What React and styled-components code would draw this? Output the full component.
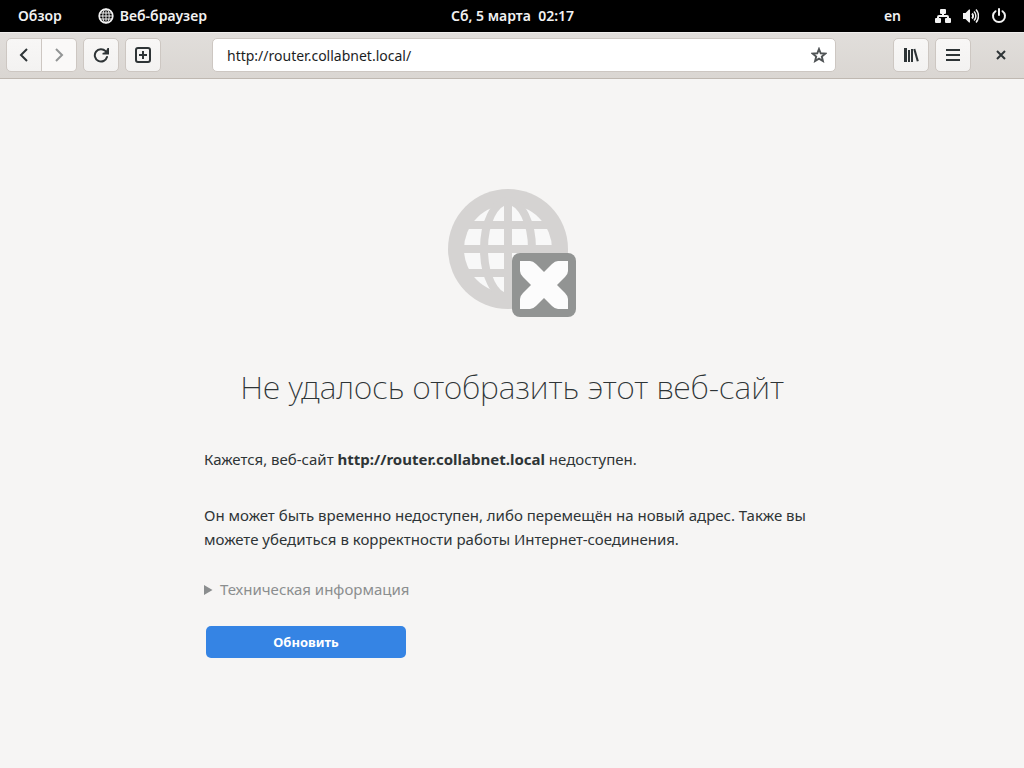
import React from 'react'

import styled, { createGlobalStyle } from 'styled-components'

function App() {
  return (
    <>
      <GlobalStyle />
      <Screen>
        <Panel>
          <PanelGroup>
            <PanelButton>
              <PanelLabel>Обзор</PanelLabel>
            </PanelButton>
            <PanelButton>
              <GlobeIcon />
              <PanelLabel>Веб-браузер</PanelLabel>
            </PanelButton>
          </PanelGroup>
          <PanelButton>
            <PanelLabel>Сб, 5 марта&nbsp; 02:17</PanelLabel>
          </PanelButton>
          <PanelGroup $end>
            <PanelButton>
              <PanelLabel>en</PanelLabel>
            </PanelButton>
            <StatusButton aria-label="Система">
              <NetworkIcon />
              <VolumeIcon />
              <PowerIcon />
            </StatusButton>
          </PanelGroup>
        </Panel>

        <HeaderBar>
          <Tools>
            <Linked>
              <ToolButton aria-label="Назад">
                <Icon>
                  <path d="M11 2 5 8l6 6" />
                </Icon>
              </ToolButton>
              <ToolButton aria-label="Вперёд" disabled>
                <Icon>
                  <path d="m5 2 6 6-6 6" />
                </Icon>
              </ToolButton>
            </Linked>
            <ToolButton aria-label="Перезагрузить">
              <ReloadIcon />
            </ToolButton>
            <ToolButton aria-label="Новая вкладка">
              <Icon>
                <rect x="1" y="1" width="14" height="14" rx="2" />
                <path d="M8 4v8M4 8h8" />
              </Icon>
            </ToolButton>
          </Tools>
          <Location>
            <Address
              type="text"
              aria-label="Адрес"
              defaultValue="http://router.collabnet.local/"
            />
            <PlainButton aria-label="Добавить закладку">
              <StarIcon />
            </PlainButton>
          </Location>
          <Tools>
            <ToolButton aria-label="Библиотека">
              <LibraryIcon />
            </ToolButton>
            <ToolButton aria-label="Меню">
              <Icon>
                <path d="M1 3h14M1 8h14M1 13h14" />
              </Icon>
            </ToolButton>
            <CloseButton aria-label="Закрыть">
              <Icon>
                <path d="m4 4 8 8M12 4l-8 8" />
              </Icon>
            </CloseButton>
          </Tools>
        </HeaderBar>

        <Page>
          <BrokenSite />
          <Title>Не удалось отобразить этот веб-сайт</Title>
          <Text>
            Кажется, веб-сайт <b>http://router.collabnet.local</b> недоступен.
          </Text>
          <Text>
            Он может быть временно недоступен, либо перемещён на новый адрес.
            Также вы можете убедиться в корректности работы
            Интернет-соединения.
          </Text>
          <Details>
            <summary>Техническая информация</summary>
          </Details>
          <Reload>Обновить</Reload>
        </Page>
      </Screen>
    </>
  )
}

export default App

function Icon({ children }) {
  return (
    <Svg viewBox="0 0 16 16" aria-hidden="true">
      {children}
    </Svg>
  )
}

function GlobeIcon() {
  return (
    <ThinSvg viewBox="0 0 16 16" aria-hidden="true">
      <circle cx="8" cy="8" r="6.800" strokeWidth="1.700" />
      <ellipse cx="8" cy="8" rx="3.200" ry="7" />
      <path d="M8 1v14M1 8h14M2 5h12M2 11h12" />
    </ThinSvg>
  )
}

function NetworkIcon() {
  return (
    <SolidSvg viewBox="0 0 16 16" aria-hidden="true">
      <path d="M6 1h4a1 1 0 0 1 1 1v3a1 1 0 0 1-1 1H9v1h3a2 2 0 0 1 2 2v1h1a1 1 0 0 1 1 1v3a1 1 0 0 1-1 1h-4a1 1 0 0 1-1-1v-3a1 1 0 0 1 1-1h1V9H4v1h1a1 1 0 0 1 1 1v3a1 1 0 0 1-1 1H1a1 1 0 0 1-1-1v-3a1 1 0 0 1 1-1h1V9a2 2 0 0 1 2-2h3V6H6a1 1 0 0 1-1-1V2a1 1 0 0 1 1-1Z" />
    </SolidSvg>
  )
}

function VolumeIcon() {
  return (
    <Svg viewBox="0 0 16 16" aria-hidden="true">
      <path
        d="M0 5h2.500L6 1.500h1v13H6L2.500 11H0Z"
        fill="currentColor"
        stroke="none"
      />
      <path d="M9 5.500c1.400 1.300 1.400 3.700 0 5" />
      <path d="M11 3.500c2.500 2.500 2.500 6.500 0 9" strokeWidth="1.500" />
      <path d="M13 1.500c3.300 3.800 3.300 9.200 0 13" strokeWidth="1.500" />
    </Svg>
  )
}

function PowerIcon() {
  return (
    <Svg viewBox="0 0 16 16" aria-hidden="true">
      <path d="M4.500 3.200a6 6 0 1 0 7 0" strokeLinecap="round" />
      <path d="M8 1v6" strokeLinecap="round" />
    </Svg>
  )
}

function ReloadIcon() {
  return (
    <Svg viewBox="0 0 16 16" aria-hidden="true">
      <path d="M12.600 4.200A6.200 6.200 0 1 0 14 10" strokeLinecap="round" />
      <path d="M16 1v6.500H9.500V6l3-1L14.500 1Z" fill="currentColor" stroke="none" />
    </Svg>
  )
}

function StarIcon() {
  return (
    <Svg viewBox="0 0 16 16" aria-hidden="true">
      <path
        d="m8 2 1.700 4.300 4.600.3-3.500 3 1.100 4.400L8 11.600 4.100 14l1.100-4.400-3.500-3 4.600-.3Z"
        strokeWidth="1.900"
      />
    </Svg>
  )
}

function LibraryIcon() {
  return (
    <SolidSvg viewBox="0 0 16 16" aria-hidden="true">
      <path d="M1 1h3v14H1ZM5 3h2v12H5ZM8 2h2v13H8Z" />
      <path d="m10.300 2.300 2-.6L15.800 14l-2 .6Z" />
    </SolidSvg>
  )
}

function BrokenSite() {
  return (
    <Picture viewBox="0 0 128 128" role="img" aria-label="Сайт недоступен">
      <circle cx="60" cy="60" r="60" fill="#d5d3d2" />
      <circle cx="60" cy="60" r="44" fill="#f8f8f8" />
      <g fill="none" stroke="#d5d3d2" strokeWidth="8">
        <ellipse cx="60" cy="60" rx="24" ry="48" />
        <path d="M60 12v96M12 60h96M16 36h88M16 84h88" />
      </g>
      <rect x="64" y="64" width="64" height="64" rx="8" fill="#929493" />
      <path
        d="M72 72h10q3 0 6 3l8 8 8-8q3-3 6-3h10v10q0 3-3 6l-8 8 8 8q3 3 3 6v10h-10q-3 0-6-3l-8-8-8 8q-3 3-6 3h-10v-10q0-3 3-6l8-8-8-8q-3-3-3-6Z"
        fill="#fcfcfc"
      />
    </Picture>
  )
}

const GlobalStyle = createGlobalStyle`
  * {
    box-sizing: border-box;
  }

  body {
    margin: 0;
    background: #f6f5f4;
    color: #2e3436;
    font-family: "Noto Sans", "Open Sans", sans-serif;
  }

  button, input {
    font: inherit;
    color: inherit;
    border: 0;
    padding: 0;
    margin: 0;
    background: none;
  }
`

const Screen = styled.div`
  display: flex;
  flex-direction: column;
  min-height: 100vh;
`

const Panel = styled.header`
  display: grid;
  grid-template-columns: 1fr auto 1fr;
  height: 32px;
  padding: 0 17px 0 18px;
  background: #000;
  color: #f2f2f2;
  font-size: 14px;
  font-weight: 600;
`

const PanelGroup = styled.div`
  display: flex;
  gap: ${(props) => (props.$end ? '34px' : '36px')};
  justify-content: ${(props) => (props.$end ? 'flex-end' : 'flex-start')};
`

const PanelButton = styled.button`
  display: flex;
  align-items: center;
  gap: 6px;
  white-space: nowrap;
`

const PanelLabel = styled.span`
  padding-bottom: 2px;
`

const StatusButton = styled(PanelButton)`
  gap: 12px;
`

const HeaderBar = styled.div`
  display: flex;
  align-items: flex-start;
  height: 47px;
  padding: 5px 5px 0 6px;
  background: linear-gradient(#e1dedb, #dad6d2);
  border-top: 1px solid #efedec;
  border-bottom: 1px solid #bfb8b1;
`

const Tools = styled.div`
  display: flex;
  gap: 6px;
`

const ToolButton = styled.button`
  display: flex;
  align-items: center;
  justify-content: center;
  width: 36px;
  height: 34px;
  background: linear-gradient(#f8f7f6, #f3f2f1);
  border: 1px solid #cdc7c2;
  border-radius: 5px;

  &:disabled {
    background: #faf9f8;
    color: #929595;
  }
`

const Linked = styled.div`
  display: flex;

  ${ToolButton}:first-child {
    border-radius: 5px 0 0 5px;
  }

  ${ToolButton}:last-child {
    width: 35px;
    border-left: 0;
    border-radius: 0 5px 5px 0;
  }
`

const CloseButton = styled(ToolButton)`
  margin-left: 6px;
  background: none;
  border-color: transparent;
`

const Location = styled.div`
  display: flex;
  align-items: center;
  flex: 1;
  min-width: 0;
  height: 34px;
  margin: 0 57px 0 51px;
  padding: 0 8px 0 14px;
  background: #fff;
  border: 1px solid #cdc7c2;
  border-radius: 5px;
`

const Address = styled.input`
  flex: 1;
  min-width: 0;
  outline: none;
  color: #1c1e1f;
  font-size: 14px;
`

const PlainButton = styled.button`
  display: flex;
  color: #505456;
`

const Page = styled.main`
  display: flex;
  flex-direction: column;
  align-items: flex-start;
  width: 100%;
  max-width: 632px;
  margin: 0 auto;
  padding: 110px 8px 32px;
`

const Picture = styled.svg`
  width: 128px;
  height: 128px;
  align-self: center;
`

const Title = styled.h1`
  align-self: center;
  margin: 46px 0 0;
  font-size: 32px;
  font-weight: 200;
  line-height: 48px;
  text-align: center;
`

const Text = styled.p`
  margin: 36px 0 0;
  font-size: 15px;
  line-height: 24px;

  & + & {
    margin-top: 32px;
  }
`

const Details = styled.details`
  margin-top: 26px;
  color: #8b8e8f;
  font-size: 15px;
  line-height: 24px;
`

const Reload = styled.button`
  width: 200px;
  height: 32px;
  margin: 25px 2px 0;
  border-radius: 5px;
  background: #3584e4;
  color: #fff;
  font-size: 13px;
  font-weight: 700;
`

const Svg = styled.svg`
  flex: none;
  width: 16px;
  height: 16px;
  fill: none;
  stroke: currentColor;
  stroke-width: 2;
`

const ThinSvg = styled(Svg)`
  stroke-width: 1;
`

const SolidSvg = styled(Svg)`
  fill: currentColor;
  stroke: none;
`
